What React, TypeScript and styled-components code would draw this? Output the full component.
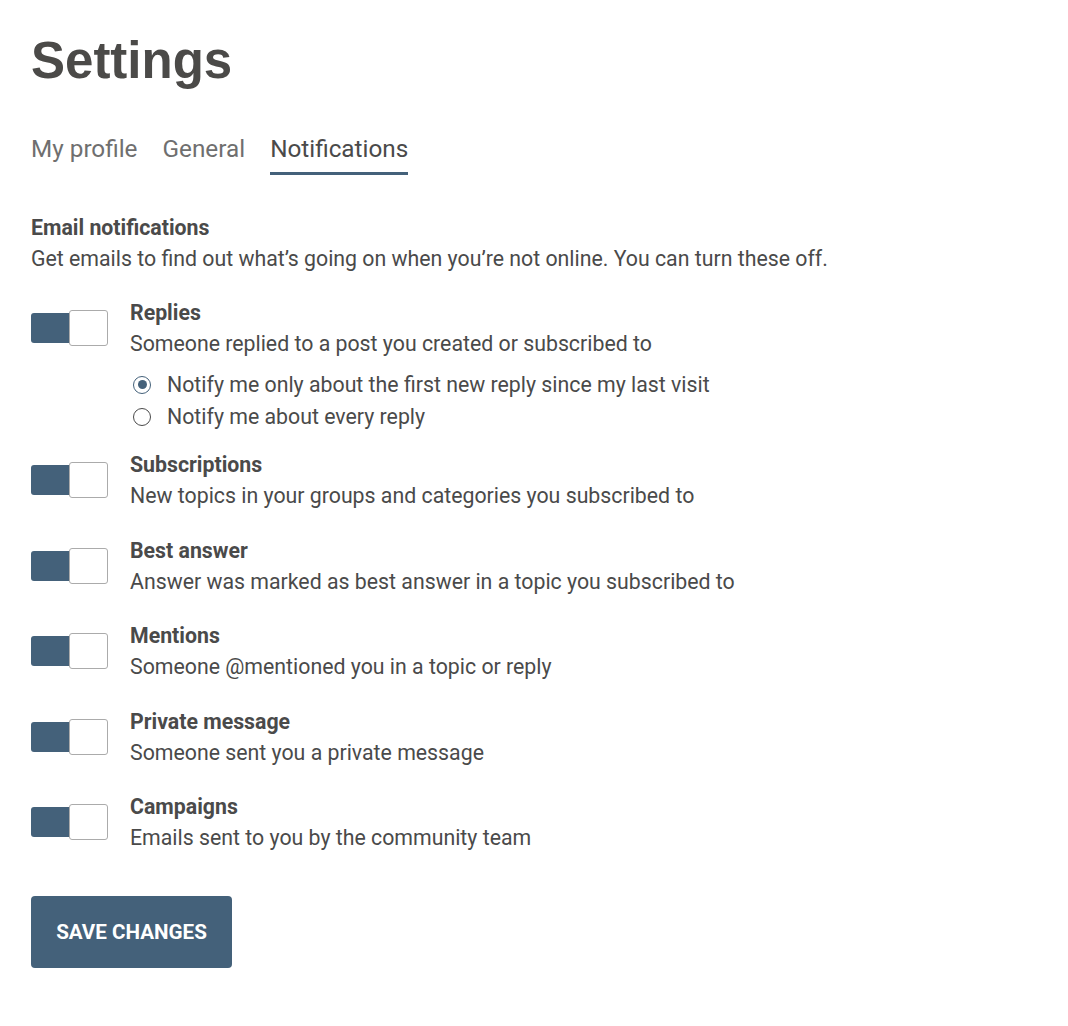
import React from "react";
import styled, { createGlobalStyle } from "styled-components";

const Global = createGlobalStyle`
  html, body { margin: 0; padding: 0; background: #ffffff; }
  body { font-family: Roboto, "Noto Sans", sans-serif; color: #4a4a4a; }
  * { box-sizing: border-box; }
`;

const accent = "#44617a";
const textSize = "21.3px";

const Page = styled.div`
  padding: 31px 31px 40px 31px;
`;

const Title = styled.h1`
  margin: 0;
  font-family: "Liberation Sans", Arial, sans-serif;
  font-weight: 700;
  font-size: 51px;
  line-height: 60px;
  color: #4b4a48;
`;

const Tabs = styled.nav`
  display: flex;
  gap: 25px;
  margin-top: 44px;
`;

const Tab = styled.a<{ $active?: boolean }>`
  font-size: 24.3px;
  line-height: 28px;
  padding-bottom: 9px;
  border-bottom: 3px solid ${(p) => (p.$active ? accent : "transparent")};
  color: ${(p) => (p.$active ? "#4a4a4a" : "#6f6f6f")};
  text-decoration: none;
  cursor: pointer;
`;

const Section = styled.section`
  margin-top: 36.5px;
`;

const SectionTitle = styled.h2`
  margin: 0;
  font-size: ${textSize};
  line-height: 31px;
  font-weight: 700;
  color: #4a4a4a;
`;

const SectionText = styled.p`
  margin: 0;
  font-size: ${textSize};
  line-height: 31px;
  color: #4a4a4a;
`;

const List = styled.div`
  display: flex;
  flex-direction: column;
  gap: 23.5px;
  margin-top: 23px;
`;

const Row = styled.div<{ $top?: boolean }>`
  display: flex;
  align-items: ${(p) => (p.$top ? "flex-start" : "center")};
  gap: 22px;
`;

const Toggle = styled.div<{ $top?: boolean }>`
  display: flex;
  align-items: center;
  width: 77px;
  flex: none;
  margin-top: ${(p) => (p.$top ? "13.5px" : "0")};
`;

const Track = styled.span`
  width: 38px;
  height: 30px;
  background: ${accent};
  border-radius: 3px 0 0 3px;
`;

const Knob = styled.span`
  width: 39px;
  height: 36px;
  background: #ffffff;
  border: 1px solid #ababab;
  border-radius: 3px;
`;

const Body = styled.div`
  display: flex;
  flex-direction: column;
`;

const RowTitle = styled.div`
  font-size: ${textSize};
  line-height: 31px;
  font-weight: 700;
  color: #4a4a4a;
`;

const RowText = styled.div`
  font-size: ${textSize};
  line-height: 31px;
  color: #4a4a4a;
`;

const Radios = styled.div`
  display: flex;
  flex-direction: column;
  gap: 8px;
  margin-top: 14px;
  margin-bottom: -3px;
`;

const RadioItem = styled.label`
  display: flex;
  align-items: center;
  gap: 16px;
  padding-left: 3px;
  font-size: ${textSize};
  line-height: 24px;
  color: #4a4a4a;
`;

const RadioDot = styled.span<{ $checked?: boolean }>`
  width: 18px;
  height: 18px;
  border-radius: 50%;
  border: 1.5px solid ${(p) => (p.$checked ? accent : "#4a4a4a")};
  display: flex;
  align-items: center;
  justify-content: center;
  flex: none;
  &::after {
    content: "";
    width: 9px;
    height: 9px;
    border-radius: 50%;
    background: ${(p) => (p.$checked ? accent : "transparent")};
  }
`;

const SaveButton = styled.button`
  margin-top: 42.5px;
  width: 201px;
  height: 72px;
  border: none;
  border-radius: 4px;
  background: ${accent};
  color: #ffffff;
  font-family: Roboto, "Noto Sans", sans-serif;
  font-weight: 700;
  font-size: 20.6px;
  text-transform: uppercase;
  cursor: pointer;
`;

const items = [
  { title: "Subscriptions", text: "New topics in your groups and categories you subscribed to" },
  { title: "Best answer", text: "Answer was marked as best answer in a topic you subscribed to" },
  { title: "Mentions", text: "Someone @mentioned you in a topic or reply" },
  { title: "Private message", text: "Someone sent you a private message" },
  { title: "Campaigns", text: "Emails sent to you by the community team" },
];

const Switch = ({ top }: { top?: boolean }) => (
  <Toggle $top={top} role="switch" aria-checked="true">
    <Track />
    <Knob />
  </Toggle>
);

export default function App() {
  return (
    <>
      <Global />
      <Page>
        <Title>Settings</Title>
        <Tabs>
          <Tab>My profile</Tab>
          <Tab>General</Tab>
          <Tab $active>Notifications</Tab>
        </Tabs>
        <Section>
          <SectionTitle>Email notifications</SectionTitle>
          <SectionText>
            Get emails to find out what’s going on when you’re not online. You can turn these off.
          </SectionText>
          <List>
            <Row $top>
              <Switch top />
              <Body>
                <RowTitle>Replies</RowTitle>
                <RowText>Someone replied to a post you created or subscribed to</RowText>
                <Radios>
                  <RadioItem>
                    <RadioDot $checked />
                    Notify me only about the first new reply since my last visit
                  </RadioItem>
                  <RadioItem>
                    <RadioDot />
                    Notify me about every reply
                  </RadioItem>
                </Radios>
              </Body>
            </Row>
            {items.map((it) => (
              <Row key={it.title}>
                <Switch />
                <Body>
                  <RowTitle>{it.title}</RowTitle>
                  <RowText>{it.text}</RowText>
                </Body>
              </Row>
            ))}
          </List>
          <SaveButton>Save changes</SaveButton>
        </Section>
      </Page>
    </>
  );
}
